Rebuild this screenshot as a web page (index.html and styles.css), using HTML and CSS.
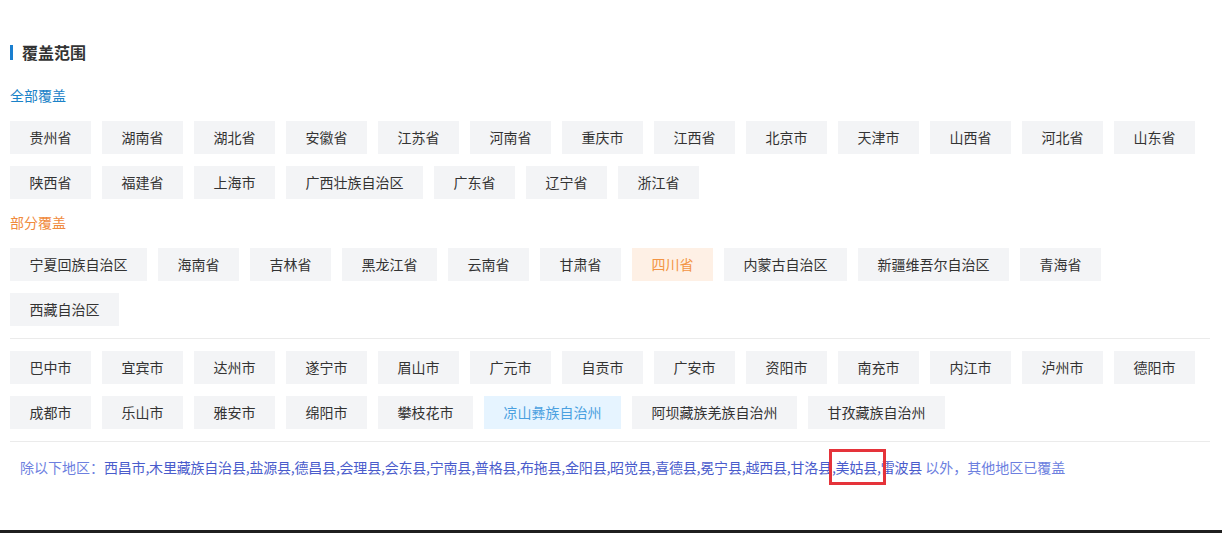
FILE: index.html
```html
<!DOCTYPE html>
<html lang="zh-CN">
<head>
<meta charset="utf-8">
<title>覆盖范围</title>
<link rel="stylesheet" href="styles.css">
</head>
<body>
<div class="page">
  <h2 class="title"><span class="title-bar"></span>覆盖范围</h2>

  <div class="label label-full">全部覆盖</div>
  <div class="tags">
    <span class="tag">贵州省</span><span class="tag">湖南省</span><span class="tag">湖北省</span><span class="tag">安徽省</span><span class="tag">江苏省</span><span class="tag">河南省</span><span class="tag">重庆市</span><span class="tag">江西省</span><span class="tag">北京市</span><span class="tag">天津市</span><span class="tag">山西省</span><span class="tag">河北省</span><span class="tag">山东省</span>
    <span class="tag">陕西省</span><span class="tag">福建省</span><span class="tag">上海市</span><span class="tag">广西壮族自治区</span><span class="tag">广东省</span><span class="tag">辽宁省</span><span class="tag">浙江省</span>
  </div>

  <div class="label label-part">部分覆盖</div>
  <div class="tags">
    <span class="tag">宁夏回族自治区</span><span class="tag">海南省</span><span class="tag">吉林省</span><span class="tag">黑龙江省</span><span class="tag">云南省</span><span class="tag">甘肃省</span><span class="tag tag-orange">四川省</span><span class="tag">内蒙古自治区</span><span class="tag">新疆维吾尔自治区</span><span class="tag">青海省</span>
    <span class="tag">西藏自治区</span>
  </div>

  <div class="divider"></div>

  <div class="tags">
    <span class="tag">巴中市</span><span class="tag">宜宾市</span><span class="tag">达州市</span><span class="tag">遂宁市</span><span class="tag">眉山市</span><span class="tag">广元市</span><span class="tag">自贡市</span><span class="tag">广安市</span><span class="tag">资阳市</span><span class="tag">南充市</span><span class="tag">内江市</span><span class="tag">泸州市</span><span class="tag">德阳市</span>
    <span class="tag">成都市</span><span class="tag">乐山市</span><span class="tag">雅安市</span><span class="tag">绵阳市</span><span class="tag">攀枝花市</span><span class="tag tag-blue">凉山彝族自治州</span><span class="tag">阿坝藏族羌族自治州</span><span class="tag">甘孜藏族自治州</span>
  </div>

  <div class="divider"></div>

  <p class="except"><span class="except-lead">除以下地区：</span><span class="except-list">西昌市,木里藏族自治县,盐源县,德昌县,会理县,会东县,宁南县,普格县,布拖县,金阳县,昭觉县,喜德县,冕宁县,越西县,甘洛县,<span class="mark">美姑县</span>,雷波县</span><span class="except-tail"> 以外，其他地区已覆盖</span></p>
</div>
<div class="footer-bar"></div>
</body>
</html>
```
FILE: styles.css
```css
html, body {
  margin: 0;
  padding: 0;
  background: #ffffff;
}

body {
  font-family: "Microsoft YaHei", "Noto Sans CJK SC", "Noto Sans", sans-serif;
  color: #333333;
  overflow: hidden;
}

.page {
  padding: 42px 12px 0 10px;
}

.title {
  display: flex;
  align-items: center;
  margin: 0 0 23px 0;
  height: 20px;
  font-size: 16px;
  font-weight: bold;
  color: #333333;
  line-height: 20px;
}

.title-bar {
  display: inline-block;
  width: 3px;
  height: 15px;
  background: #1a7fd0;
  margin-right: 9px;
}

.label {
  font-size: 14px;
  line-height: 20px;
  height: 20px;
  margin-bottom: 16px;
}

.label-full {
  color: #1a82c8;
}

.label-part {
  color: #f08a3c;
  margin-top: 13px;
}

.tags {
  display: flex;
  flex-wrap: wrap;
  gap: 12px 11px;
}

.tag {
  display: inline-block;
  height: 33px;
  line-height: 33px;
  padding: 0 19.5px;
  font-size: 14px;
  background: #f3f4f6;
  color: #333333;
  white-space: nowrap;
}

.tag-orange {
  background: #fef0e5;
  color: #f39443;
}

.tag-blue {
  background: #e6f4ff;
  color: #4aa0e0;
}

.divider {
  height: 1px;
  background: #ebebeb;
  margin: 12px 0;
}

.except {
  margin: 15px 0 0 0;
  padding-left: 10px;
  font-size: 14px;
  line-height: 20px;
  white-space: nowrap;
}

.except-lead,
.except-tail {
  color: #6d7fdf;
}

.except-list {
  color: #4a5ccc;
  letter-spacing: -0.2px;
}

.mark {
  position: relative;
}

.mark::after {
  content: "";
  position: absolute;
  left: -7px;
  right: -9px;
  top: -8px;
  bottom: -8px;
  border: 3px solid #e5333a;
}

.footer-bar {
  margin-top: 53px;
  height: 3px;
  background: #1f1f1f;
}
```
